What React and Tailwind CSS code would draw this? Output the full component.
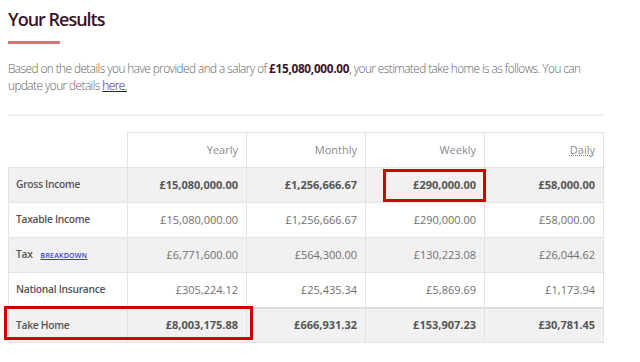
import React from 'react';

const rows = [
    { label: "Gross Income", values: ["£15,080,000.00", "£1,256,666.67", "£290,000.00", "£58,000.00"], strong: true, shade: true },
    { label: "Taxable Income", values: ["£15,080,000.00", "£1,256,666.67", "£290,000.00", "£58,000.00"] },
    { label: "Tax", link: "BREAKDOWN", values: ["£6,771,600.00", "£564,300.00", "£130,223.08", "£26,044.62"], shade: true },
    { label: "National Insurance", values: ["£305,224.12", "£25,435.34", "£5,869.69", "£1,173.94"] },
    { label: "Take Home", values: ["£8,003,175.88", "£666,931.32", "£153,907.23", "£30,781.45"], strong: true, shade: true, total: true },
];

function App() {
    return (
        <div className="w-[640px] h-[362px] bg-white overflow-hidden font-['Open_Sans',sans-serif]">
            <div className="relative w-[596px] ml-2 pt-[6px]">
                {/* Heading */}
                <h2 className="text-[18px] leading-[26px] font-semibold tracking-[-1px] text-[#3b1228]">Your Results</h2>
                <div className="mt-[9px] w-[52px] h-[3px] bg-[#d27677]" />

                <p className="mt-[16px] text-[11.8px] leading-[17px] font-light tracking-[-0.55px] text-[#636363]">
                    Based on the details you have provided and a salary of{' '}
                    <strong className="font-bold tracking-[-0.3px] text-[#3b1228]">£15,080,000.00</strong>, your estimated take home is as follows. You can update your details{' '}
                    <a href="#" className="text-[#1a0dab] underline">here.</a>
                </p>

                <div className="mt-[20px] h-[2px] bg-[#eeeeee]" />

                {/* Results table */}
                <table className="mt-[16px] w-full table-fixed border-collapse text-[11px]">
                    <thead>
                        <tr className="h-[35px]">
                            <th className="w-1/5" />
                            {["Yearly", "Monthly", "Weekly"].map((h) => (
                                <th key={h} className="border border-[#e3e3e3] px-2 text-right font-normal text-[#8a8a8a]">{h}</th>
                            ))}
                            <th className="border border-[#e3e3e3] px-2 text-right font-normal text-[#8a8a8a]">
                                <abbr className="underline decoration-dotted">Daily</abbr>
                            </th>
                        </tr>
                    </thead>
                    <tbody>
                        {rows.map((row) => (
                            <tr
                                key={row.label}
                                className={`h-[35px] ${row.shade ? 'bg-[#f1f1f1]' : 'bg-white'} ${row.total ? 'border-t-2 border-t-[#dddddd]' : ''}`}
                            >
                                <td className="border border-[#e3e3e3] px-[7px] text-[10.3px] font-semibold tracking-[-0.3px] text-[#555555]">
                                    {row.label}
                                    {row.link && (
                                        <a href="#" className="ml-[8px] text-[7px] text-[#3b3bdb] underline tracking-[0.2px]">{row.link}</a>
                                    )}
                                </td>
                                {row.values.map((v, i) => (
                                    <td
                                        key={i}
                                        className={`border border-[#e3e3e3] px-2 text-right ${row.strong ? 'font-bold text-[#555555]' : 'text-[#707070]'}`}
                                    >
                                        {v}
                                    </td>
                                ))}
                            </tr>
                        ))}
                    </tbody>
                </table>

                {/* Annotation boxes */}
                <div className="absolute left-[375px] top-[169px] w-[103px] h-[33px] border-[3px] border-[#d40000]" />
                <div className="absolute left-[-4px] top-[306px] w-[249px] h-[34px] border-[3px] border-[#d40000]" />
            </div>
        </div>
    );
}

export default App;
